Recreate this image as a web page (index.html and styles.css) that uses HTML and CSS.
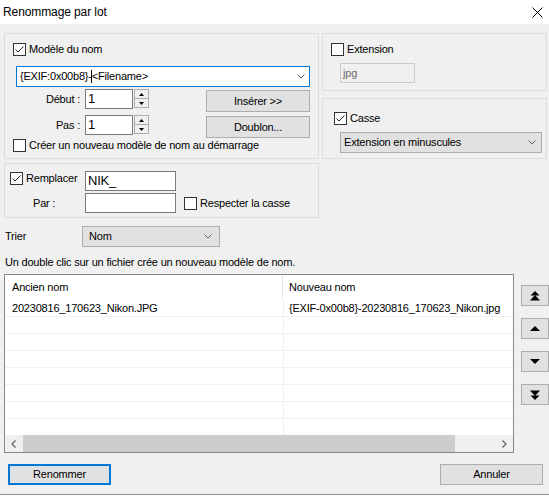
FILE: index.html
```html
<!DOCTYPE html>
<html lang="fr">
<head>
<meta charset="utf-8">
<title>Renommage par lot</title>
<link rel="stylesheet" href="styles.css">
</head>
<body>
<div class="window">
  <div class="titlebar">
    <span class="title">Renommage par lot</span>
    <svg class="close" width="11" height="11" viewBox="0 0 11 11"><path d="M0.5 0.5L10.5 10.5M10.5 0.5L0.5 10.5" stroke="#000" stroke-width="1"/></svg>
  </div>
  <div class="client">
    <div class="top">
      <div class="group g-model">
        <div class="check">
          <svg class="cb" width="13" height="13" viewBox="0 0 13 13"><rect x="0.5" y="0.5" width="12" height="12" fill="#fff" stroke="#333"/><polyline points="2.5,6.5 5,9 10.5,3.5" fill="none" stroke="#222"/></svg>
          <span>Modèle du nom</span>
        </div>
        <div class="combo edit">
          <span>{EXIF:0x00b8}-<i class="caret"></i>&lt;Filename&gt;</span>
          <svg class="chev" width="8" height="5" viewBox="0 0 8 5"><polyline points="0.5,0.5 4,4 7.5,0.5" fill="none" stroke="#606060"/></svg>
        </div>
        <div class="spin-row r1">
          <span class="lbl">Début :</span>
          <span class="num">1</span>
          <span class="spin">
            <span><svg width="5" height="3" viewBox="0 0 5 3"><polygon points="2.5,0 5,3 0,3" fill="#000"/></svg></span>
            <span><svg width="5" height="3" viewBox="0 0 5 3"><polygon points="0,0 5,0 2.5,3" fill="#000"/></svg></span>
          </span>
          <span class="btn btn-side">Insérer &gt;&gt;</span>
        </div>
        <div class="spin-row r2">
          <span class="lbl">Pas :</span>
          <span class="num">1</span>
          <span class="spin">
            <span><svg width="5" height="3" viewBox="0 0 5 3"><polygon points="2.5,0 5,3 0,3" fill="#000"/></svg></span>
            <span><svg width="5" height="3" viewBox="0 0 5 3"><polygon points="0,0 5,0 2.5,3" fill="#000"/></svg></span>
          </span>
          <span class="btn btn-side">Doublon...</span>
        </div>
        <div class="check">
          <svg class="cb" width="13" height="13" viewBox="0 0 13 13"><rect x="0.5" y="0.5" width="12" height="12" fill="#fff" stroke="#333"/></svg>
          <span>Créer un nouveau modèle de nom au démarrage</span>
        </div>
      </div>
      <div class="rightcol">
        <div class="group g-ext">
          <div class="check">
            <svg class="cb" width="13" height="13" viewBox="0 0 13 13"><rect x="0.5" y="0.5" width="12" height="12" fill="#fff" stroke="#333"/></svg>
            <span>Extension</span>
          </div>
          <div class="dis-input">jpg</div>
        </div>
        <div class="group g-case">
          <div class="check">
            <svg class="cb" width="13" height="13" viewBox="0 0 13 13"><rect x="0.5" y="0.5" width="12" height="12" fill="#fff" stroke="#333"/><polyline points="2.5,6.5 5,9 10.5,3.5" fill="none" stroke="#222"/></svg>
            <span>Casse</span>
          </div>
          <div class="combo">
            <span>Extension en minuscules</span>
            <svg class="chev" width="8" height="5" viewBox="0 0 8 5"><polyline points="0.5,0.5 4,4 7.5,0.5" fill="none" stroke="#606060"/></svg>
          </div>
        </div>
      </div>
    </div>

    <div class="group g-replace">
      <div class="rrow">
        <div class="rlead">
          <div class="check top1">
            <svg class="cb" width="13" height="13" viewBox="0 0 13 13"><rect x="0.5" y="0.5" width="12" height="12" fill="#fff" stroke="#333"/><polyline points="2.5,6.5 5,9 10.5,3.5" fill="none" stroke="#222"/></svg>
            <span>Remplacer</span>
          </div>
        </div>
        <div class="txt">NIK_</div>
      </div>
      <div class="rrow mid">
        <div class="rlead par">Par :</div>
        <div class="txt"></div>
        <div class="check respect">
          <svg class="cb" width="13" height="13" viewBox="0 0 13 13"><rect x="0.5" y="0.5" width="12" height="12" fill="#fff" stroke="#333"/></svg>
          <span>Respecter la casse</span>
        </div>
      </div>
    </div>

    <div class="sort-row">
      <span class="sort-lbl">Trier</span>
      <div class="combo sort">
        <span>Nom</span>
        <svg class="chev" width="8" height="5" viewBox="0 0 8 5"><polyline points="0.5,0.5 4,4 7.5,0.5" fill="none" stroke="#606060"/></svg>
      </div>
    </div>

    <div class="hint">Un double clic sur un fichier crée un nouveau modèle de nom.</div>

    <div class="list-row">
      <div class="list">
        <div class="lhead">
          <div>Ancien nom</div>
          <div>Nouveau nom</div>
        </div>
        <div class="rows">
          <div class="row"><div>20230816_170623_Nikon.JPG</div><div>{EXIF-0x00b8}-20230816_170623_Nikon.jpg</div></div>
          <div class="row"><div></div><div></div></div>
          <div class="row"><div></div><div></div></div>
          <div class="row"><div></div><div></div></div>
          <div class="row"><div></div><div></div></div>
          <div class="row"><div></div><div></div></div>
          <div class="row"><div></div><div></div></div>
          <div class="row"><div></div><div></div></div>
        </div>
        <div class="hscroll">
          <div class="arrow"><svg width="5" height="8" viewBox="0 0 5 8"><polyline points="4.5,0.5 1,4 4.5,7.5" fill="none" stroke="#606060" stroke-width="1.2"/></svg></div>
          <div class="track"><div class="thumb"></div></div>
          <div class="arrow"><svg width="5" height="8" viewBox="0 0 5 8"><polyline points="0.5,0.5 4,4 0.5,7.5" fill="none" stroke="#606060" stroke-width="1.2"/></svg></div>
        </div>
      </div>
      <div class="movers">
        <div class="mbtn"><svg width="10" height="10" viewBox="0 0 10 10"><polygon points="5,0 9.5,4.5 0.5,4.5" fill="#000"/><polygon points="5,4 10,9.5 0,9.5" fill="#000"/></svg></div>
        <div class="mbtn"><svg width="10" height="5" viewBox="0 0 10 5"><polygon points="5,0 10,5 0,5" fill="#000"/></svg></div>
        <div class="mbtn"><svg width="10" height="5" viewBox="0 0 10 5"><polygon points="0,0 10,0 5,5" fill="#000"/></svg></div>
        <div class="mbtn"><svg width="10" height="10" viewBox="0 0 10 10"><polygon points="0,0.5 10,0.5 5,6" fill="#000"/><polygon points="0.5,5.5 9.5,5.5 5,10" fill="#000"/></svg></div>
      </div>
    </div>

    <div class="footer">
      <div class="btn foot default">Renommer</div>
      <div class="btn foot">Annuler</div>
    </div>
  </div>
  <div class="edge"></div>
</div>
</body>
</html>
```

FILE: styles.css
```css
* { box-sizing: border-box; }
html, body { margin: 0; padding: 0; }
body {
  width: 549px;
  height: 497px;
  overflow: hidden;
  background: #fff;
  font-family: "Liberation Sans", Arial, sans-serif;
  font-size: 11px;
  line-height: 13px;
  letter-spacing: -0.2px;
  color: #000;
}
.titlebar {
  height: 24px;
  display: flex;
  align-items: center;
  justify-content: space-between;
  padding: 0 6px 0 3px;
  background: #fff;
}
.title { font-size: 12px; letter-spacing: -0.1px; }
.close { display: block; }

.client {
  height: 470px;
  background: #f0f0f0;
  padding: 9px 0 0 4px;
}
.edge { height: 1px; background: #8c8c8c; }

.top { display: flex; gap: 3px; }
.group { border: 1px solid #dcdcdc; }

.check {
  display: flex;
  align-items: center;
  height: 13px;
  gap: 3px;
  white-space: nowrap;
}
.cb { display: block; flex: none; }

.g-model {
  width: 315px;
  height: 126px;
  padding: 9px 0 0 8px;
}
.combo {
  display: flex;
  align-items: center;
  justify-content: space-between;
  height: 21px;
  border: 1px solid #adadad;
  background: #e1e1e1;
  padding: 0 5px 0 3px;
  white-space: nowrap;
}
.combo.edit { background: #fff; border-color: #0078d7; }
.chev { display: block; flex: none; }
.g-model .combo { width: 294px; margin: 10px 0 0 3px; padding-right: 4px; }
.caret {
  display: inline-block;
  width: 1px;
  height: 13px;
  background: #000;
  vertical-align: middle;
  margin-left: -1px;
}

.spin-row { display: flex; align-items: flex-start; }
.r1 { height: 26px; margin-top: 2px; }
.r2 { height: 24px; }
.lbl {
  width: 67px;
  margin-right: 5px;
  text-align: right;
  height: 20px;
  line-height: 20px;
  flex: none;
}
.num {
  width: 48px;
  height: 20px;
  border: 1px solid #7a7a7a;
  background: #fff;
  font-size: 13px;
  line-height: 18px;
  padding-left: 2px;
  flex: none;
}
.spin {
  display: flex;
  flex-direction: column;
  width: 15px;
  height: 19px;
  margin-left: 1px;
  flex: none;
}
.spin span {
  height: 10px;
  border: 1px solid #adadad;
  background: #f0f0f0;
  display: flex;
  align-items: center;
  justify-content: center;
}
.spin span + span { margin-top: -1px; }
.spin svg { display: block; }

.btn {
  display: flex;
  align-items: center;
  justify-content: center;
  border: 1px solid #adadad;
  background: #e1e1e1;
  white-space: nowrap;
}
.btn-side { width: 104px; height: 22px; margin: 1px 0 0 57px; }

.rightcol { width: 225px; display: flex; flex-direction: column; }
.g-ext { height: 58px; padding: 9px 0 0 8px; }
.dis-input {
  width: 75px;
  height: 20px;
  margin: 7px 0 0 9px;
  border: 1px solid #cccccc;
  background: #f0f0f0;
  color: #6d6d6d;
  padding-left: 2px;
  line-height: 18px;
}
.g-case { height: 61px; margin-top: 7px; padding: 13px 0 0 11px; }
.g-case .combo { width: 202px; margin: 7px 0 0 6px; }

.g-replace {
  width: 315px;
  height: 55px;
  margin-top: 4px;
  padding: 7px 0 0 5px;
}
.rrow { display: flex; align-items: center; height: 20px; }
.rrow.mid { margin-top: 2px; }
.rrow:first-child { align-items: flex-start; }
.rlead { width: 75px; flex: none; }
.top1 { margin-top: 1px; }
.par { padding-left: 23px; }
.txt {
  width: 91px;
  height: 20px;
  border: 1px solid #7a7a7a;
  background: #fff;
  font-size: 13px;
  line-height: 18px;
  padding-left: 2px;
  flex: none;
}
.respect { margin-left: 8px; }

.sort-row {
  display: flex;
  align-items: center;
  margin-top: 8px;
  padding-left: 1px;
}
.sort-lbl { width: 77px; }
.combo.sort { width: 138px; padding: 0 7px 0 6px; }

.hint { margin-top: 9px; padding-left: 1px; height: 13px; }

.list-row { display: flex; margin-top: 5px; height: 179px; }
.list {
  width: 510px;
  height: 179px;
  border: 1px solid #828790;
  background: #fff;
  display: flex;
  flex-direction: column;
  flex: none;
}
.lhead {
  display: grid;
  grid-template-columns: 278px 1fr;
  height: 25px;
  flex: none;
}
.lhead div { display: flex; align-items: center; padding-left: 7px; }
.lhead div:first-child { border-right: 1px solid #e5e5e5; margin-bottom: 1px; }
.lhead div + div { padding-left: 6px; }
.rows { flex: 1; overflow: hidden; }
.row {
  display: grid;
  grid-template-columns: 279px 1fr;
  height: 17px;
  border-bottom: 1px solid #f0f0f0;
}
.row div { padding-left: 7px; line-height: 16px; white-space: nowrap; overflow: hidden; }
.row div:first-child { border-right: 1px solid #f0f0f0; }
.row div + div { padding-left: 5px; }
.hscroll { height: 17px; flex: none; display: flex; background: #f0f0f0; }
.arrow { width: 17px; display: flex; align-items: center; justify-content: center; flex: none; }
.arrow svg { display: block; }
.track { flex: 1; padding-left: 1px; }
.thumb { width: 432px; height: 17px; background: #cdcdcd; }

.movers {
  margin-left: 7px;
  width: 28px;
  padding-top: 11px;
  display: flex;
  flex-direction: column;
  gap: 12px;
  flex: none;
}
.mbtn {
  height: 21px;
  border: 1px solid #adadad;
  background: #e1e1e1;
  display: flex;
  align-items: center;
  justify-content: center;
}
.mbtn svg { display: block; }

.footer {
  display: flex;
  justify-content: space-between;
  margin-top: 11px;
  padding: 0 6px 0 4px;
}
.foot { width: 103px; height: 21px; }
.btn.default { border: 2px solid #0078d7; }
```
